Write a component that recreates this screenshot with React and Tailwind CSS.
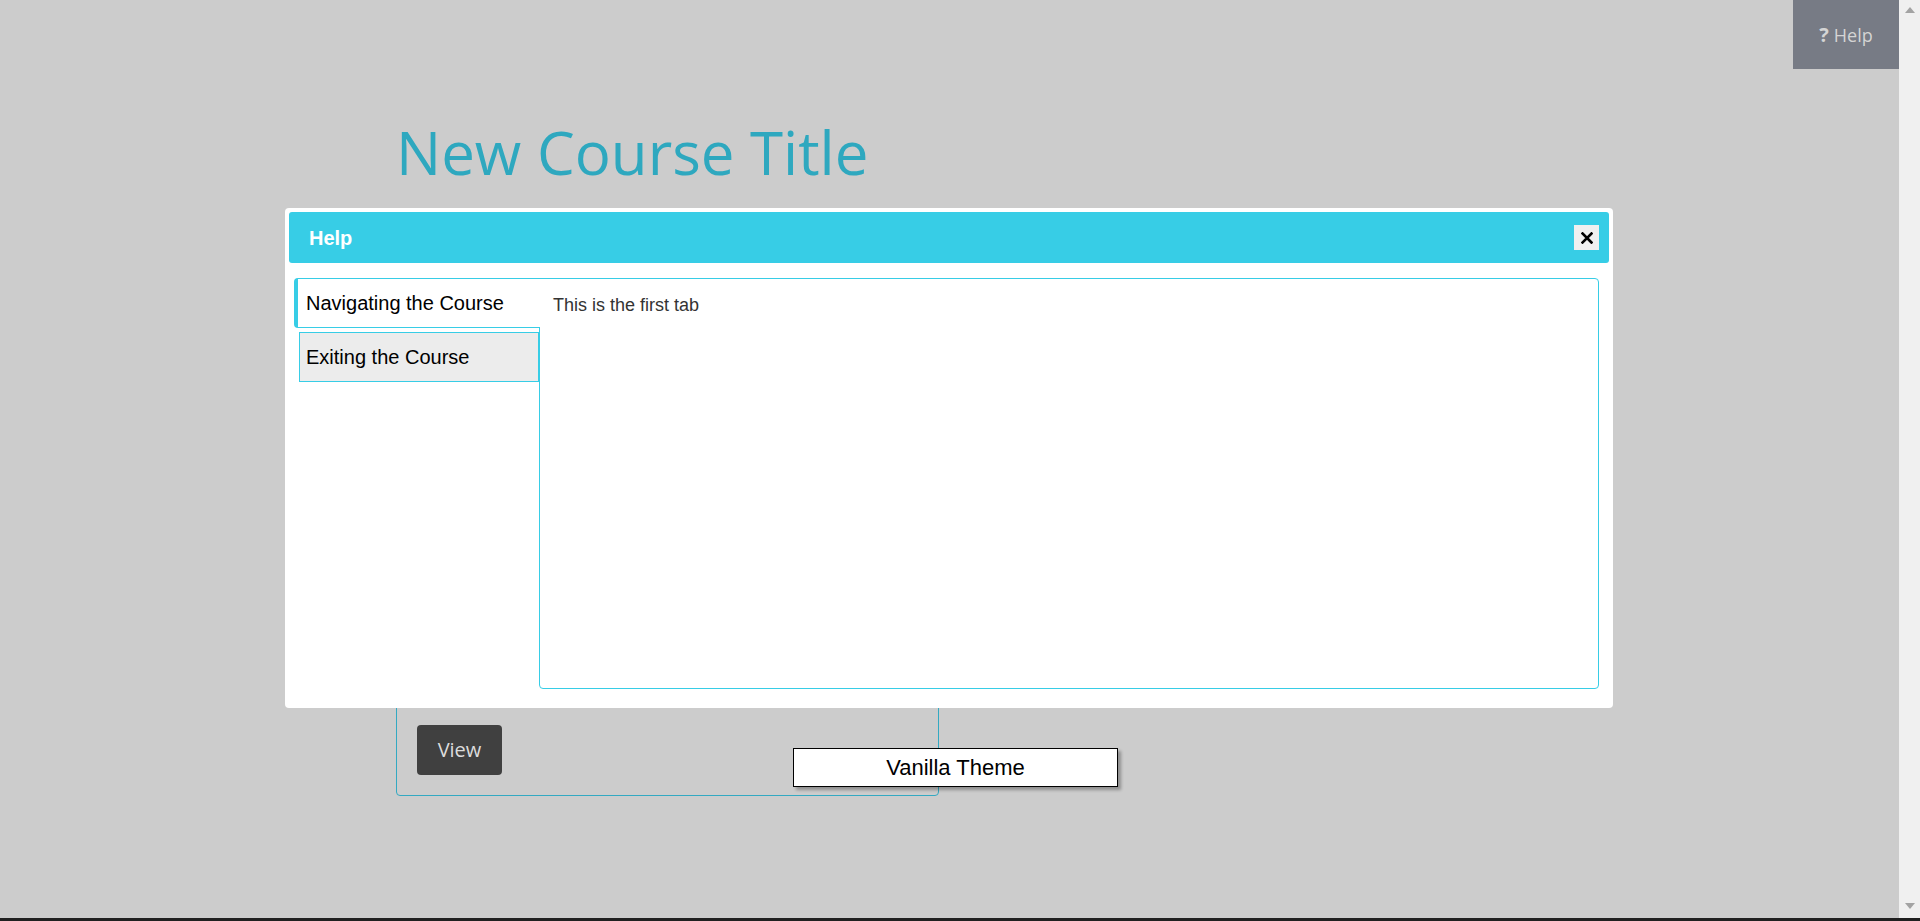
import React, { useState } from "react";

const tabs = [
  { id: "nav", label: "Navigating the Course", body: "This is the first tab" },
  { id: "exit", label: "Exiting the Course", body: "This is the second tab" },
];

const HelpModal = () => {
  const [active, setActive] = useState("nav");
  const current = tabs.find((t) => t.id === active);

  return (
    <div className="absolute left-[285px] top-[208px] w-[1328px] h-[500px] bg-white rounded-[4px] p-[4px] flex flex-col">
      {/* Header */}
      <div className="h-[51px] bg-[#37cde6] rounded-[3px] flex items-center justify-between pl-[20px] pr-[10px]">
        <span className="text-white font-bold text-[20px]">Help</span>
        <button className="w-[25px] h-[25px] bg-[#f0f0f0] flex items-center justify-center">
          <svg width="12" height="12" viewBox="0 0 12 12">
            <path d="M1.5 1.5 L10.5 10.5 M10.5 1.5 L1.5 10.5" stroke="#000" strokeWidth="2.6" strokeLinecap="square" />
          </svg>
        </button>
      </div>

      {/* Tabs */}
      <div className="flex flex-1 mt-[15px] ml-[5px] mr-[10px] mb-[15px]">
        <div className="w-[245px] flex flex-col shrink-0">
          {tabs.map((t) =>
            t.id === active ? (
              <div
                key={t.id}
                onClick={() => setActive(t.id)}
                className="relative z-10 mr-[-1px] h-[50px] bg-white border-l-4 border-t border-b border-[#37cde6] rounded-l-[4px] flex items-center pl-[8px] text-[20px] text-black cursor-pointer"
              >
                {t.label}
              </div>
            ) : (
              <div
                key={t.id}
                onClick={() => setActive(t.id)}
                className="mt-[4px] ml-[5px] h-[50px] bg-[#ececec] border border-[#37cde6] flex items-center pl-[6px] text-[20px] text-black cursor-pointer"
              >
                {t.label}
              </div>
            )
          )}
        </div>
        <div className="flex-1 border border-[#37cde6] rounded-r-[4px] rounded-bl-[4px] pl-[13px] pt-[13px] text-[18px] text-[#333]">
          {current.body}
        </div>
      </div>
    </div>
  );
};

export default function App() {
  return (
    <div className="w-[1920px] h-[921px] flex flex-col overflow-hidden font-['Liberation_Sans',Arial,sans-serif]">
      <div className="flex flex-1">
        {/* Page */}
        <div className="relative flex-1 bg-[#cccccc] flex flex-col">
          <div className="flex justify-end">
            <button className="w-[106px] h-[69px] bg-[#777b85] flex items-center justify-center gap-[5px] text-[#d4d4d4] font-['Open_Sans',sans-serif]">
              <span className="font-bold text-[20px] leading-none">?</span>
              <span className="text-[18px] leading-none">Help</span>
            </button>
          </div>

          <div className="pl-[396px]">
            <h1 className="mt-[47px] text-[60px] leading-[72px] text-[#2ea8bf] font-['Open_Sans',sans-serif]">
              New Course Title
            </h1>

            <div className="mt-[42px] w-[543px] h-[566px] border border-[#33a9c2] rounded-[4px] flex flex-col justify-end pl-[20px] pb-[20px]">
              <button className="w-[85px] h-[50px] bg-[#404040] rounded-[4px] text-[#dcdcdc] text-[20px] font-['Open_Sans',sans-serif]">
                View
              </button>
            </div>
          </div>

          {/* Theme label floats over the page */}
          <div className="absolute left-[793px] top-[748px] w-[325px] h-[39px] bg-white border border-black shadow-[3px_3px_3px_rgba(0,0,0,0.3)] flex items-center justify-center text-[22px] text-black">
            Vanilla Theme
          </div>

          <HelpModal />
        </div>

        {/* Scrollbar */}
        <div className="w-[21px] bg-[#f0f0f0] flex flex-col items-center justify-between py-[7px]">
          <svg width="10" height="6" viewBox="0 0 10 6">
            <path d="M5 0 L10 6 L0 6 Z" fill="#a3a3a3" />
          </svg>
          <svg width="10" height="6" viewBox="0 0 10 6" className="mb-[2px]">
            <path d="M0 0 L10 0 L5 6 Z" fill="#a3a3a3" />
          </svg>
        </div>
      </div>
      <div className="h-[3px] bg-[#202020]" />
    </div>
  );
}
